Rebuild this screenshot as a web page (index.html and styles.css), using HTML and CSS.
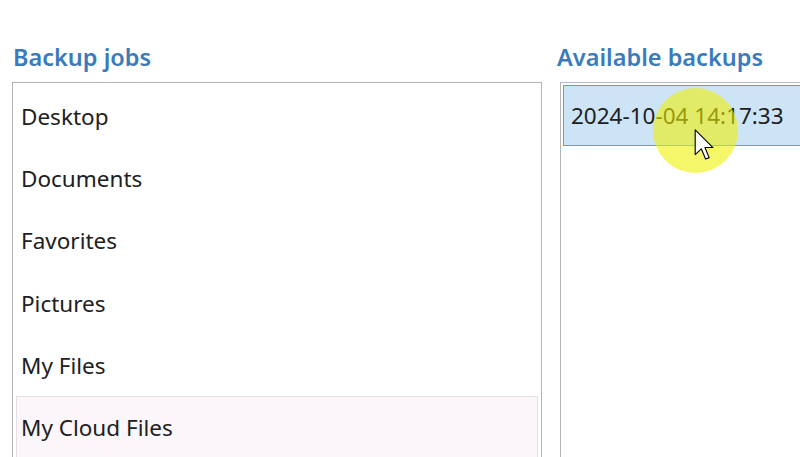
FILE: index.html
```html
<!DOCTYPE html>
<html>
<head>
<meta charset="utf-8">
<link rel="stylesheet" href="styles.css">
</head>
<body>
<div class="page">
  <section class="col col-jobs">
    <h2 class="heading">Backup jobs</h2>
    <div class="listbox">
      <div class="row">Desktop</div>
      <div class="row">Documents</div>
      <div class="row">Favorites</div>
      <div class="row">Pictures</div>
      <div class="row">My Files</div>
      <div class="row row-hover">My Cloud Files</div>
    </div>
  </section>
  <section class="col col-backups">
    <h2 class="heading">Available backups</h2>
    <div class="listbox listbox-backups">
      <div class="row row-selected">2024-10-04 14:17:33</div>
    </div>
  </section>
</div>
<div class="highlight"></div>
<svg class="cursor" width="20" height="32" viewBox="0 0 12 20">
  <path d="M0.5 0.5 L0.5 16 L4.3 12.4 L7 18.8 L9.2 17.9 L6.6 11.6 L11.6 11.6 Z" fill="#fff" stroke="#000" stroke-width="0.7" stroke-linejoin="round"/>
</svg>
</body>
</html>
```
FILE: styles.css
```css
html, body {
  margin: 0;
  padding: 0;
  background: #ffffff;
  overflow: hidden;
}
body {
  width: 800px;
  height: 457px;
  position: relative;
  font-family: "Noto Sans", "Open Sans", sans-serif;
  color: #202020;
}
.page {
  display: flex;
  padding: 40px 0 0 12px;
  gap: 18px;
  height: 457px;
  box-sizing: border-box;
  overflow: hidden;
}
.col {
  display: flex;
  flex-direction: column;
}
.col-jobs {
  width: 530px;
  flex: none;
}
.col-backups {
  flex: 1;
  min-width: 0;
}
.heading {
  margin: 0 0 0 1px;
  height: 42px;
  font-size: 23.5px;
  font-weight: 600;
  color: #3a7bbd;
  line-height: 34px;
  white-space: nowrap;
}
.col-backups .heading {
  margin-left: -3px;
}
.listbox {
  border: 1px solid #b4b4b4;
  border-bottom: none;
  padding: 2px 3px 0 3px;
  flex: 1;
  min-height: 0;
  overflow: hidden;
  box-sizing: border-box;
  display: flex;
  flex-direction: column;
}
.listbox-backups {
  border-right: none;
  padding: 1.5px 0 0 2px;
}
.row {
  height: 62.3px;
  flex: none;
  box-sizing: border-box;
  display: flex;
  align-items: center;
  padding-left: 5px;
  font-size: 22.5px;
  white-space: nowrap;
}
.row-hover {
  background: #faf6fa;
  border: 1px solid #e4e0e4;
  padding-left: 4px;
}
.row-selected {
  height: 61px;
  background: #cde4f6;
  border: 1px solid #5f9fd8;
  border-right: none;
  padding-left: 7px;
}
.highlight {
  position: absolute;
  left: 653px;
  top: 88px;
  width: 85px;
  height: 85px;
  border-radius: 50%;
  background: rgba(240, 240, 0, 0.58);
}
.cursor {
  position: absolute;
  left: 694px;
  top: 129px;
}
```
